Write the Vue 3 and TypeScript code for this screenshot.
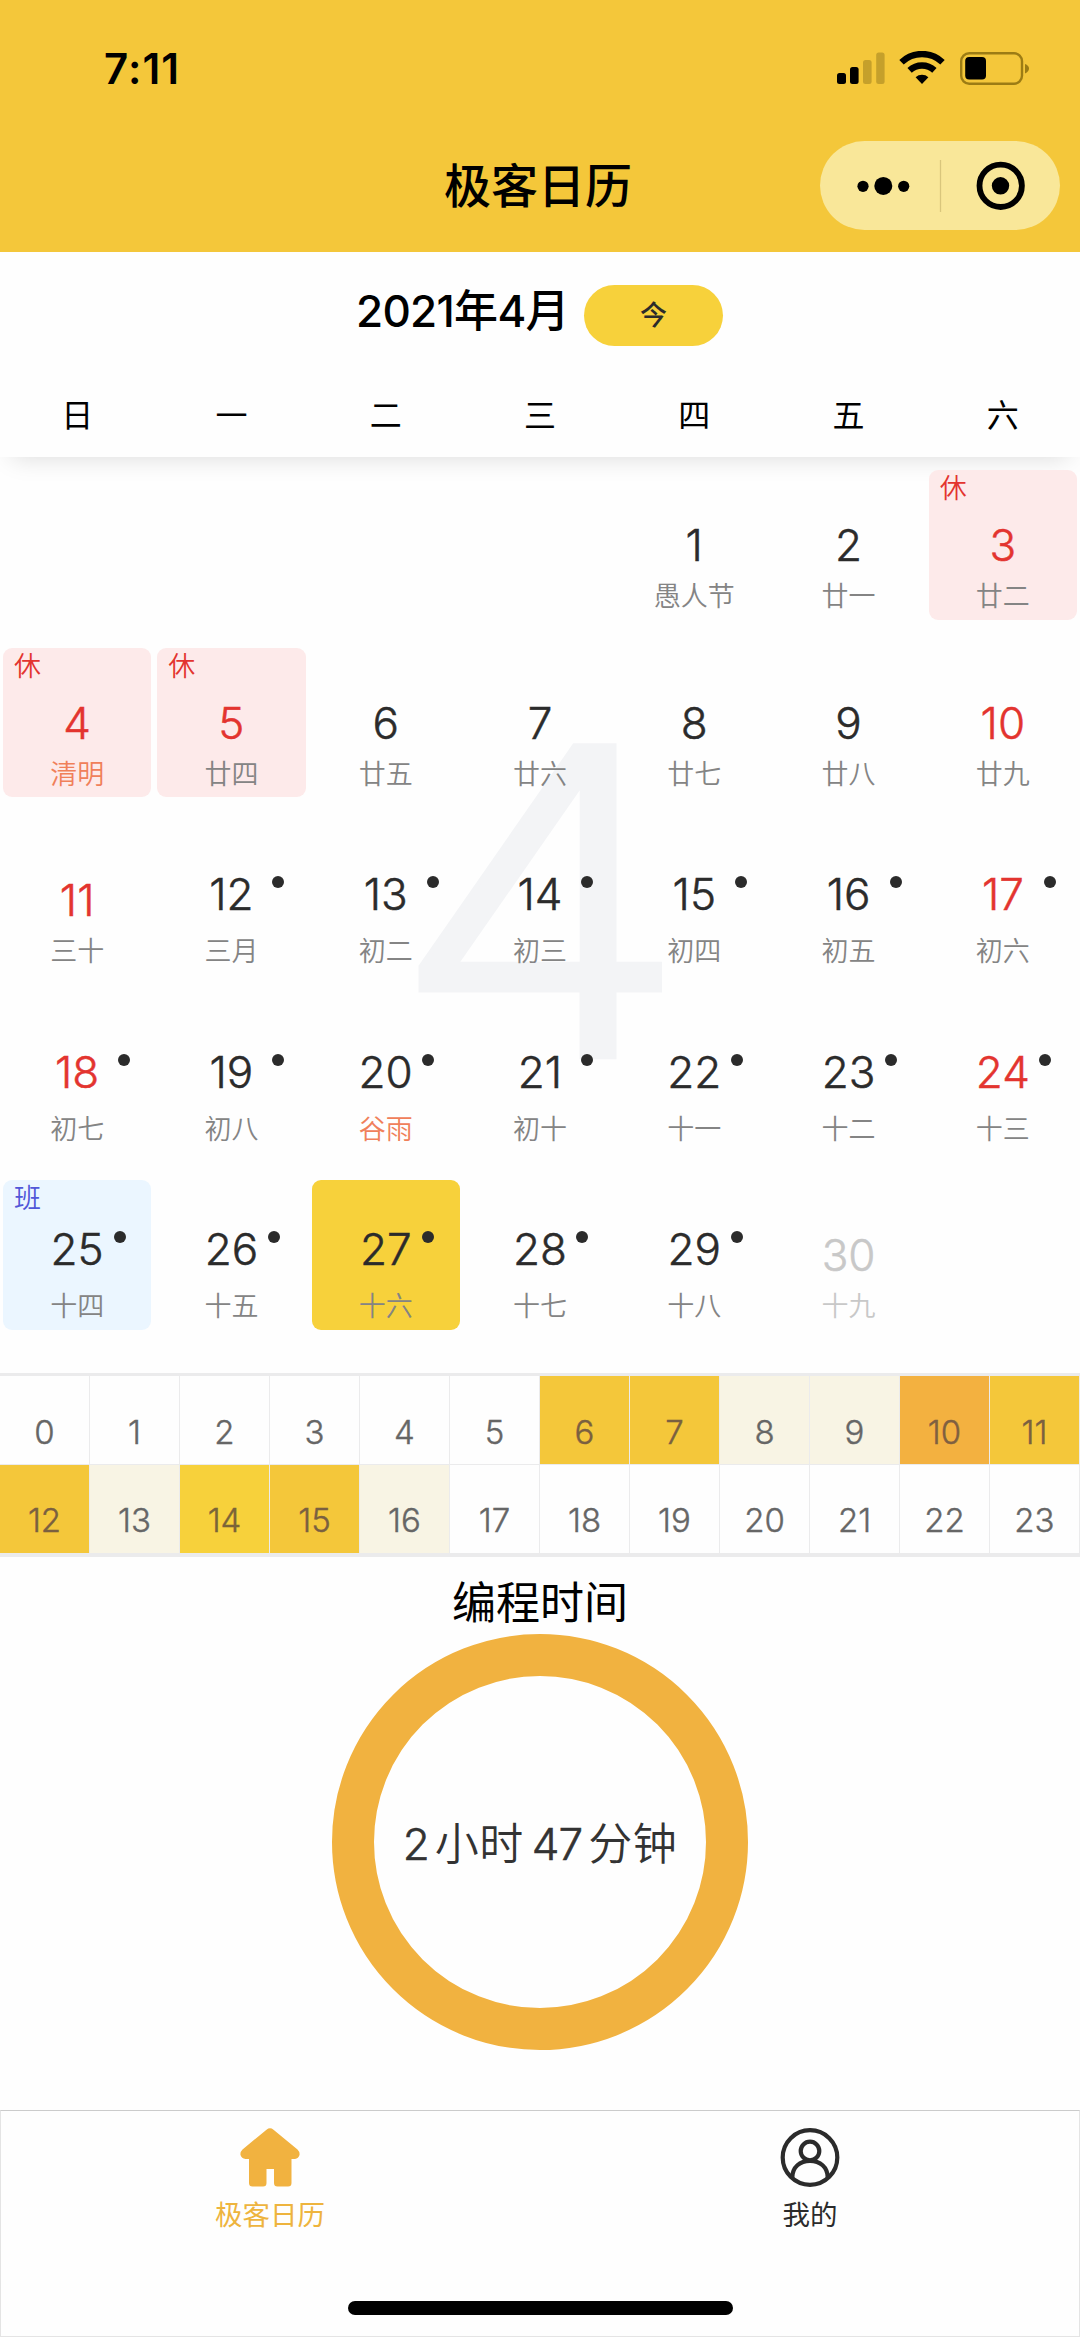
<script setup lang="ts">
type Kind = 'rest' | 'work' | 'today'

interface Day {
  n: number
  lunar: string
  red?: boolean
  term?: boolean
  dot?: boolean
  muted?: boolean
  kind?: Kind
}

const weekdays: string[] = ['日', '一', '二', '三', '四', '五', '六']

const lunarNames: string[] = [
  '愚人节', '廿一', '廿二', '清明', '廿四', '廿五', '廿六', '廿七', '廿八', '廿九',
  '三十', '三月', '初二', '初三', '初四', '初五', '初六', '初七', '初八', '谷雨',
  '初十', '十一', '十二', '十三', '十四', '十五', '十六', '十七', '十八', '十九',
]

const kinds: Record<number, Kind> = { 3: 'rest', 4: 'rest', 5: 'rest', 25: 'work', 27: 'today' }
const redDays = [3, 4, 5, 10, 11, 17, 18, 24]
const termDays = [4, 20]

const days: Day[] = lunarNames.map((lunar, i) => {
  const n = i + 1
  return {
    n,
    lunar,
    red: redDays.includes(n),
    term: termDays.includes(n),
    dot: n >= 12 && n <= 29,
    muted: n === 30,
    kind: kinds[n],
  }
})

const tags: Partial<Record<Kind, string>> = { rest: '休', work: '班' }

const levels: Record<number, string> = {
  6: 'mid', 7: 'mid', 8: 'low', 9: 'low', 10: 'high', 11: 'mid',
  12: 'mid', 13: 'low', 14: 'soft', 15: 'mid', 16: 'low',
}
const hours = Array.from({ length: 24 }, (_, h) => ({ h, level: levels[h] ?? '' }))
</script>

<template>
  <div class="page">
    <header class="top">
      <div class="status">
        <span class="clock">7:11</span>
        <div class="indicators">
          <svg class="signal" width="48" height="32" viewBox="0 0 48 32">
            <rect x="0" y="21" width="9" height="11" rx="2.5" />
            <rect x="13" y="15" width="8.6" height="17" rx="2.5" />
            <rect x="26" y="8" width="8.6" height="24" rx="2.5" fill="#c5a02b" />
            <rect x="39.2" y="0.5" width="8.4" height="31.5" rx="2.5" fill="#c5a02b" />
          </svg>
          <svg class="wifi" width="46" height="33" viewBox="0 0 46 33">
            <g fill="none" stroke="#000" stroke-width="6.4">
              <path d="M2.5 11.2A29.8 29.8 0 0 1 43.5 11.2" />
              <path d="M10.6 19.3A18.3 18.3 0 0 1 35.4 19.3" />
            </g>
            <path d="M23 33L16.6 26.2A9.6 9.6 0 0 1 29.4 26.2Z" />
          </svg>
          <svg class="battery" width="70" height="33" viewBox="0 0 70 33">
            <rect x="1.2" y="1.2" width="60.8" height="30.6" rx="8" fill="none" stroke="#9c7c14" stroke-width="2.4" />
            <rect x="5.2" y="5" width="20.8" height="22.6" rx="4" />
            <path d="M65 12Q69 13.5 69 16.5T65 21.5Z" fill="#9c7c14" />
          </svg>
        </div>
      </div>
      <div class="nav">
        <h1 class="title">极客日历</h1>
        <div class="capsule">
          <svg width="240" height="89" viewBox="0 0 240 89">
            <circle cx="43" cy="45.3" r="5.6" />
            <circle cx="63.3" cy="44.9" r="9" />
            <circle cx="83.7" cy="45.3" r="5.6" />
            <path d="M120.5 19V71" stroke="#d9c67c" stroke-width="1.3" />
            <circle cx="180.7" cy="44.8" r="21.2" fill="none" stroke="#000" stroke-width="5.8" />
            <circle cx="180.5" cy="44.8" r="8.7" />
          </svg>
        </div>
      </div>
    </header>

    <section class="month-bar">
      <div class="month-line">
        <span class="month">2021年4月</span>
        <button class="today-btn">今</button>
      </div>
      <div class="weekdays">
        <span v-for="w in weekdays" :key="w">{{ w }}</span>
      </div>
    </section>

    <section class="calendar">
      <div class="watermark">4</div>
      <div class="grid">
        <div
          v-for="d in days"
          :key="d.n"
          class="day"
          :class="[d.kind, { first: d.n === 1, red: d.red, dotted: d.dot, muted: d.muted }]"
        >
          <span v-if="d.kind && tags[d.kind]" class="tag">{{ tags[d.kind] }}</span>
          <span class="num">{{ d.n }}</span>
          <span class="lunar" :class="{ term: d.term }">{{ d.lunar }}</span>
          <i v-if="d.dot" class="dot" :class="{ near: d.n >= 20 && d.n !== 21 }"></i>
        </div>
      </div>
    </section>

    <section class="hours">
      <span v-for="x in hours" :key="x.h" class="hour" :class="x.level">{{ x.h }}</span>
    </section>

    <section class="coding">
      <h2>编程时间</h2>
      <div class="ring">
        <span class="n">2</span><span class="u first-unit">小时</span><span class="n">47</span><span class="u">分钟</span>
      </div>
    </section>

    <nav class="tabs">
      <div class="tab-row">
        <a class="tab active">
          <svg width="60" height="60" viewBox="0 0 60 60" fill="#f1b240">
            <path d="M26.5 1.7Q30 -1 33.5 1.7L57.5 21.5Q60 24 59.5 27Q58.5 30.500 55 31H51.5V55Q51.5 58.5 48 58.5H37.5Q34 58.5 34 55V41H26.5V55Q26.5 58.5 23 58.5H12.5Q9 58.5 9 55V31H5.5Q1.5 30.5 .5 27Q0 24 2.5 21.5Z" />
          </svg>
          <span>极客日历</span>
        </a>
        <a class="tab">
          <svg width="60" height="60" viewBox="0 0 60 60" fill="none" stroke="#2b2b2b" stroke-width="4.2">
            <circle cx="30" cy="29.5" r="27.3" />
            <circle cx="30" cy="23" r="9.3" />
            <path d="M12.3 49.5C12.3 39 20 32.8 30 32.8S47.7 39 47.7 49.5" />
          </svg>
          <span>我的</span>
        </a>
      </div>
      <div class="home-bar"></div>
    </nav>
  </div>
</template>

<style>
body {
  margin: 0;
  background: #fff;
}
</style>

<style scoped>
.page {
  width: 1080px;
  height: 2337px;
  display: flex;
  flex-direction: column;
  overflow: hidden;
  background: #fefefe;
  color: #000;
  font-family: Inter, "Noto Sans CJK SC", sans-serif;
}

.top {
  height: 252px;
  flex: none;
  background: #f4c73a;
}
.status {
  height: 141px;
  display: flex;
  justify-content: space-between;
  box-sizing: border-box;
  padding: 44px 50px 0 104px;
}
.clock {
  font-size: 42px;
  font-weight: 600;
  line-height: 50px;
  letter-spacing: 1.1px;
}
.indicators {
  display: flex;
  align-items: flex-start;
  padding-top: 8px;
}
.wifi {
  margin-left: 14px;
  margin-top: -1px;
}
.battery {
  margin-left: 15px;
}
.nav {
  display: grid;
  grid-template-columns: 820px 240px;
  height: 89px;
}
.title {
  margin: 0;
  padding-left: 444px;
  font-size: 47px;
  font-weight: 500;
  line-height: 90px;
  white-space: nowrap;
}
.capsule {
  height: 89px;
  border-radius: 45px;
  background: #f9e799;
}
.capsule svg {
  display: block;
}

.month-bar {
  height: 205px;
  flex: none;
  background: #fefefe;
  box-shadow: 0 12px 24px -12px rgba(0, 0, 0, 0.15);
}
.month-line {
  display: flex;
  align-items: flex-start;
  padding: 33px 0 0 356px;
  height: 61px;
}
.month {
  width: 228px;
  margin-top: -4px;
  font-size: 44px;
  font-weight: 500;
  line-height: 60px;
  letter-spacing: -0.7px;
  white-space: nowrap;
}
.today-btn {
  width: 139px;
  height: 61px;
  padding: 0 0 3px;
  border: 0;
  border-radius: 31px;
  background: #f7d13b;
  color: #2b2b2b;
  font: 500 27px/58px "Noto Sans CJK SC", sans-serif;
}
.weekdays {
  display: grid;
  grid-template-columns: repeat(7, 1fr);
  margin-top: 45px;
  text-align: center;
  font-size: 32px;
  line-height: 50px;
}

.calendar {
  position: relative;
  height: 916px;
  flex: none;
}
.watermark {
  position: absolute;
  left: 0;
  right: 0;
  top: 224px;
  text-align: center;
  font-size: 428px;
  font-weight: 300;
  line-height: 440px;
  color: #f3f4f6;
  -webkit-text-stroke: 4.500px #f3f4f6;
  transform: scaleX(1.11);
}
.grid {
  position: relative;
  display: grid;
  grid-template-columns: repeat(7, 1fr);
  grid-auto-rows: 149.5px;
  row-gap: 28px;
  padding-top: 13px;
}
.day {
  position: relative;
  display: flex;
  flex-direction: column;
  align-items: center;
  box-sizing: border-box;
  margin: 0 3px;
  padding-top: 53px;
  border-radius: 9px;
  color: #2b2b2b;
}
.day.first {
  grid-column-start: 5;
}
.day.rest {
  background: #fdeaea;
}
.day.work {
  background: #ebf6ff;
}
.day.today {
  background: #f7d13b;
}
.day.dotted {
  padding-top: 47px;
}
.num {
  height: 59px;
  font-size: 44px;
  font-weight: 300;
  line-height: 44px;
  -webkit-text-stroke: 0.5px currentColor;
}
.dotted .num {
  height: 65px;
}
.red .num {
  color: #e3342f;
}
.lunar {
  font-size: 27px;
  font-weight: 350;
  line-height: 30px;
  color: #848484;
}
.lunar.term {
  color: #f0805a;
}
.muted .num,
.muted .lunar {
  color: #c8c8c8;
}
.tag {
  position: absolute;
  left: 11px;
  top: 4px;
  font-size: 27px;
  font-weight: 350;
  line-height: 30px;
  color: #e3342f;
}
.work .tag {
  color: #5157d8;
}
.dot {
  position: absolute;
  left: calc(50% + 41px);
  top: 51px;
  width: 12px;
  height: 12px;
  border-radius: 50%;
  background: #2b2b2b;
}
.dot.near {
  left: calc(50% + 36.5px);
}

.hours {
  display: grid;
  grid-template-columns: repeat(12, 1fr);
  grid-template-rows: 89px 88px;
  flex: none;
  border-top: 3px solid #ebebec;
  border-bottom: 4px solid #ebebec;
}
.hour {
  box-sizing: border-box;
  padding-top: 23px;
  border-right: 1.5px solid #ebebec;
  border-bottom: 1px solid #ebebec;
  background-clip: padding-box;
  text-align: center;
  font-size: 33px;
  font-weight: 300;
  line-height: 66px;
  color: #666;
  -webkit-text-stroke: 0.4px currentColor;
}
.hour:nth-child(n + 13) {
  border-bottom: 0;
  padding-top: 22px;
}
.low {
  background-color: #f8f4e4;
}
.soft {
  background-color: #f7d13b;
  color: #7a6438;
}
.mid {
  background-color: #f4c73a;
  color: #7a6040;
}
.high {
  background-color: #f3b140;
  color: #7f6040;
}

.coding {
  flex: 1;
  display: flex;
  flex-direction: column;
  align-items: center;
}
.coding h2 {
  margin: 16px 0 0;
  font-size: 44px;
  font-weight: 400;
  line-height: 61px;
}
.ring {
  width: 416px;
  height: 416px;
  box-sizing: border-box;
  border: 42px solid #f1b240;
  border-radius: 50%;
  display: flex;
  align-items: center;
  justify-content: center;
  padding-top: 4px;
  white-space: nowrap;
  font-size: 44px;
  line-height: 60px;
  color: #333;
}
.n {
  letter-spacing: -1px;
  font-weight: 300;
  -webkit-text-stroke: 0.6px currentColor;
}
.u {
  margin-left: 6px;
  letter-spacing: 0.5px;
  font-weight: 350;
}
.first-unit {
  margin-right: 8px;
}

.tabs {
  box-sizing: border-box;
  height: 227px;
  flex: none;
  border: 1px solid #e4e4e4;
  border-top-color: #cbcbcb;
  display: flex;
  flex-direction: column;
  align-items: center;
}
.tab-row {
  display: grid;
  grid-template-columns: 540px 540px;
  height: 190px;
}
.tab {
  display: flex;
  flex-direction: column;
  align-items: center;
  padding-top: 17px;
  font-size: 27.5px;
  line-height: 34px;
  color: #2b2b2b;
}
.tab span {
  margin-top: 10px;
}
.tab.active {
  color: #eeb43e;
}
.home-bar {
  width: 385px;
  height: 14px;
  border-radius: 7px;
  background: #000;
}
</style>
